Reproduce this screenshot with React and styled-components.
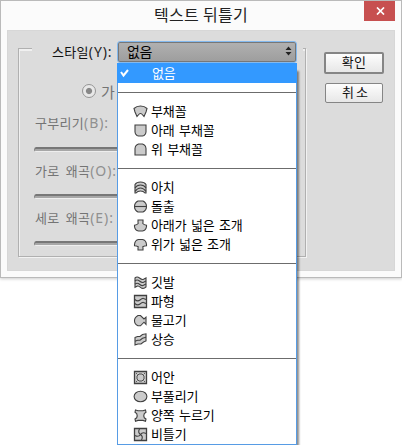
import React from 'react'
import styled, { createGlobalStyle } from 'styled-components'

const GlobalStyle = createGlobalStyle`
  body {
    margin: 0;
    background: #fff;
    overflow: hidden;
    font-family: "Noto Sans CJK KR", "Noto Sans", sans-serif;
  }
  * {
    box-sizing: border-box;
  }
`

const Screen = styled.div`
  position: relative;
  width: 402px;
  height: 445px;
  overflow: hidden;
`

const Dialog = styled.div`
  width: 402px;
  height: 278px;
  padding: 0 6px;
  border: 1px solid #bababa;
  background: #fbfbfb;
  box-shadow: 0 1px 3px rgba(0, 0, 0, 0.2);
`

const TitleBar = styled.div`
  display: flex;
  justify-content: flex-end;
  height: 29px;
`

const Title = styled.h1`
  flex: 1;
  margin: 0;
  padding-left: 147px;
  font-size: 16px;
  font-weight: 400;
  line-height: 27px;
  letter-spacing: 0.3px;
  white-space: nowrap;
  color: #222;
`

const CloseButton = styled.button`
  display: flex;
  align-items: center;
  justify-content: center;
  width: 31px;
  height: 20px;
  padding: 0 0 0 1px;
  border: 0;
  background: #c75050;
`

const Body = styled.div`
  display: flex;
  height: 241px;
  padding: 17px 0 0 11px;
  border: 1px solid #d7d7d7;
  background: #dcdcdc;
`

const Group = styled.div`
  position: relative;
  flex: none;
  width: 288px;
  height: 209px;
  margin-left: -1px;
  border: solid #b0b0b0;
  border-width: 0 1px 1px;
  box-shadow: 1px 1px 0 #f2f2f2, inset 1px 0 0 #f0f0f0;

  &::before,
  &::after {
    content: '';
    position: absolute;
    top: 0;
    height: 2px;
    border-top: 1px solid #b0b0b0;
    background: #f0f0f0;
  }
  &::before {
    left: 0;
    width: 13px;
  }
  &::after {
    right: 0;
    width: 2px;
  }
`

const Label = styled.div`
  height: 18px;
  margin-top: ${props => props.$top || 0}px;
  margin-left: ${props => props.$left || 16}px;
  font-size: 13px;
  line-height: 18px;
  letter-spacing: 0.3px;
  word-spacing: 3px;
  white-space: pre;
  color: ${props => (props.$active ? '#111' : '#747474')};
`

const Key = styled.span`
  font-family: "Noto Sans", sans-serif;
  font-size: 14px;
  letter-spacing: 0.9px;
  color: ${props => (props.$active ? '#222' : '#909090')};
`

const RadioRow = styled.div`
  display: flex;
  align-items: center;
  gap: 5px;
  height: 18px;
  margin-top: 21px;
  margin-left: 63px;
  font-size: 15px;
  letter-spacing: 3px;
  color: #747474;
`

const Radio = styled.span`
  width: 14px;
  height: 14px;
  border: 1px solid #959595;
  border-radius: 50%;
  background: radial-gradient(circle, #888 0 2.6px, #e8e8e8 3.6px);
`

const Groove = styled.div`
  width: 240px;
  height: 5px;
  margin: ${props => props.$top}px 0 0 15px;
  border: 1px solid #858585;
  border-top: 2px solid #777;
  border-bottom-color: #eee;
  border-radius: 3px;
  background: #a7a7a7;
`

const Actions = styled.div`
  display: flex;
  flex: none;
  flex-direction: column;
  align-items: center;
  gap: 9px;
  width: 60px;
  margin-top: 4px;
  margin-left: 18px;
`

const Button = styled.button`
  width: ${props => (props.$primary ? 60 : 58)}px;
  height: ${props => (props.$primary ? 22 : 20)}px;
  padding: 0 0 ${props => (props.$primary ? 2 : 3)}px ${props => (props.$primary ? 0 : 4)}px;
  border: ${props => (props.$primary ? 2 : 1)}px solid #858585;
  border-radius: 2px;
  background: linear-gradient(#fdfdfd, #e7e7e7);
  font-family: inherit;
  font-size: 13px;
  line-height: 16px;
  letter-spacing: ${props => (props.$primary ? 0.3 : 2)}px;
  white-space: nowrap;
  color: #111;
`

// the popup and its field lie over the dialog
const Dropdown = styled.div`
  position: absolute;
  top: 41px;
  left: 117px;
  width: 180px;
`

const Field = styled.div`
  display: flex;
  align-items: center;
  justify-content: space-between;
  height: 22px;
  padding: 0 4px 2px 9px;
  border: 1px solid #83b9ee;
  border-radius: 3px;
  background: linear-gradient(#b1b1b1, #9d9d9d);
  box-shadow: inset 0 0 0 1px #777;
  font-size: 14px;
  letter-spacing: -0.3px;
  color: #000;
`

const Menu = styled.div`
  height: 382px;
  border: 1px solid #579ce5;
  border-top: 0;
  background: #fff;
  box-shadow: 3px 7px 2px -1px rgba(0, 0, 0, 0.45);
`

const Item = styled.div`
  display: flex;
  align-items: center;
  height: ${props => (props.$selected ? 20 : 19)}px;
  margin: 0 ${props => (props.$selected ? -1 : 0)}px;
  padding-left: ${props => (props.$selected ? 2 : 15)}px;
  background: ${props => (props.$selected ? '#3399ff' : '#fff')};
  color: ${props => (props.$selected ? '#fff' : '#000')};
  font-size: 13px;
  line-height: 17px;
  letter-spacing: -0.1px;
  white-space: nowrap;

  svg {
    flex: none;
    margin-right: ${props => (props.$selected ? 19 : 3)}px;
  }
`

const ItemText = styled.span`
  padding-bottom: 2px;
  word-spacing: 1.5px;
`

const Separator = styled.div`
  height: 19px;
  padding-top: 9px;

  &::after {
    content: '';
    display: block;
    height: 1px;
    background: #6c6c6c;
  }
`

const shapes = {
  arc: <path d="M1 4.5Q3.5 2 7.5 2T14 4.5L13 8L11 12.5L9.7 11Q7.5 8 5.3 11L4 12.5L2 8Z" />,
  arcLower: <path d="M2 2H13V9Q13 11 11 12.5L9.5 13H5.5L4 12.5Q2 11 2 9Z" />,
  arcUpper: <path d="M2 13V6.5Q2 4 4 2.8L5.5 2H9.5L11 2.8Q13 4 13 6.5V13Z" />,
  arch: (
    <>
      <path d="M2 4.5Q3.5 2 7.5 2T13 4.5V13H12Q10.5 11 7.5 11T3 13H2Z" />
      <path fill="none" d="M2 8Q4 5 7.5 5T13 8M2 11.3Q4.5 8 7.5 8T13 11.3" />
    </>
  ),
  bulge: (
    <>
      <path d="M5 2H10Q13.5 3.7 13.5 7.5T10 13H5Q1.5 11.3 1.5 7.5T5 2Z" />
      <path d="M1 7.5H14" />
    </>
  ),
  shellLower: <path d="M5 2H10V4L9.8 5.5Q11 7 13.5 7.2V8.5Q13 12.5 9.5 13H5.5Q2 12.5 1.5 8.5V7.2Q4 7 5.2 5.5L5 4Z" />,
  shellUpper: <path d="M5 13H10V11L9.8 9.7Q11.5 9 13.5 8.8V7.5Q13 3 9.5 2.5H5.5Q2 3 1.5 7.5V8.8Q3.5 9 5.2 9.7L5 11Z" />,
  flag: (
    <>
      <path d="M2 3Q4 1 6.5 3T10.5 4.3L13 3V12L11.5 13Q9.5 14 7.5 12.3T4.5 11L2 12.3Z" />
      <path fill="none" d="M2 6Q4 4 6.5 6T10.5 7.3L13 6M2 9.2Q4 7.2 6.5 9.2T10.5 10.3L13 9" />
    </>
  ),
  wave: (
    <>
      <path strokeWidth="1.3" d="M1.5 1.5H13.5V13.5H1.5Z" />
      <path fill="none" d="M2 5.5Q4.5 8 7 6T10.5 4.5L13 5.5M2 9.5Q4.5 12 7 10T10.5 8.5L13 9.5" />
    </>
  ),
  fish: <path d="M5 2.5H7.5L11 6L13 4.2V11.3L11 9.2L7.5 12.8H5Q1.5 11 1.5 7.7T5 2.5Z" />,
  rise: (
    <>
      <path d="M2 5.5L4.5 4.5H7L9.5 2.5L13 1.8V9L10.5 10L8 12H5L2 13Z" />
      <path fill="none" d="M2 9.3L4.5 8.3H7L9.5 6.3L13 5.3" />
    </>
  ),
  fisheye: (
    <>
      <path strokeWidth="1.3" d="M1.5 1.5H13.5V13.5H1.5Z" />
      <path strokeWidth=".9" d="M6 4H9L11 6V9L9 11H6L4 9V6Z" />
      <path strokeWidth=".8" d="M3 3L4.5 4.5M12 3L10.5 4.5M3 12L4.5 10.5M12 12L10.5 10.5" />
    </>
  ),
  inflate: <ellipse cx="7.5" cy="7.5" rx="6.4" ry="5.3" />,
  squeeze: <path d="M2.5 2L5 2.8H10L12.5 2L13 4.2L11.3 5.5Q10.3 7.7 11.3 9.8L13 11L12.5 13.2L10 12.4H5L2.5 13.2L2 11L3.7 9.8Q4.7 7.7 3.7 5.5L2 4.2Z" />,
  twist: (
    <>
      <path strokeWidth="1.3" d="M1.5 1.5H13.5V13.5H1.5Z" />
      <path fill="none" d="M7.5 7.5Q4.5 5.5 6.5 2M7.5 7.5Q9.5 4.5 13 6.5M7.5 7.5Q10.5 9.5 8.5 13M7.5 7.5Q5.5 10.5 2 8.5" />
    </>
  ),
}

const groups = [
  [['arc', '부채꼴'], ['arcLower', '아래 부채꼴'], ['arcUpper', '위 부채꼴']],
  [['arch', '아치'], ['bulge', '돌출'], ['shellLower', '아래가 넓은 조개'], ['shellUpper', '위가 넓은 조개']],
  [['flag', '깃발'], ['wave', '파형'], ['fish', '물고기'], ['rise', '상승']],
  [['fisheye', '어안'], ['inflate', '부풀리기'], ['squeeze', '양쪽 누르기'], ['twist', '비틀기']],
]

const ShapeIcon = ({ name }) => (
  <svg width="15" height="15" viewBox="0 0 15 15" fill="#cbcbcb" stroke="#404040" strokeWidth="1.1">
    {shapes[name]}
  </svg>
)

const App = () => (
  <Screen>
    <GlobalStyle />
    <Dialog>
      <TitleBar>
        <Title>텍스트 뒤틀기</Title>
        <CloseButton>
          <svg width="9" height="8" viewBox="0 0 9 8" stroke="#fff" strokeWidth="1.7">
            <path d="M1 .5L8 7.5M8 .5L1 7.5" />
          </svg>
        </CloseButton>
      </TitleBar>
      <Body>
        <Group>
          <Label $top={-5} $left={33} $active>스타일<Key $active>(Y):</Key></Label>
          <RadioRow><Radio />가로</RadioRow>
          <Label $top={14}>구부리기<Key>(B):</Key></Label>
          <Groove $top={15} />
          <Label $top={10}>가로 왜곡<Key>(O):</Key></Label>
          <Groove $top={14} />
          <Label $top={10}>세로 왜곡<Key>(E):</Key></Label>
          <Groove $top={14} />
        </Group>
        <Actions>
          <Button $primary>확인</Button>
          <Button>취소</Button>
        </Actions>
      </Body>
    </Dialog>
    <Dropdown>
      <Field>
        없음
        <svg width="7" height="10" viewBox="0 0 7 10" fill="#222">
          <path d="M3.5 .5L6.5 4H.5ZM3.5 9.5L.5 6H6.5Z" />
        </svg>
      </Field>
      <Menu>
        <Item $selected>
          <svg width="14" height="10" viewBox="0 0 14 10" fill="none" stroke="#fff" strokeWidth="2">
            <path d="M2 4L4.5 7.5L9 2" />
          </svg>
          <ItemText>없음</ItemText>
        </Item>
        {groups.map((items, i) => (
          <React.Fragment key={i}>
            <Separator />
            {items.map(([name, label]) => (
              <Item key={name}><ShapeIcon name={name} /><ItemText>{label}</ItemText></Item>
            ))}
          </React.Fragment>
        ))}
      </Menu>
    </Dropdown>
  </Screen>
)

export default App
